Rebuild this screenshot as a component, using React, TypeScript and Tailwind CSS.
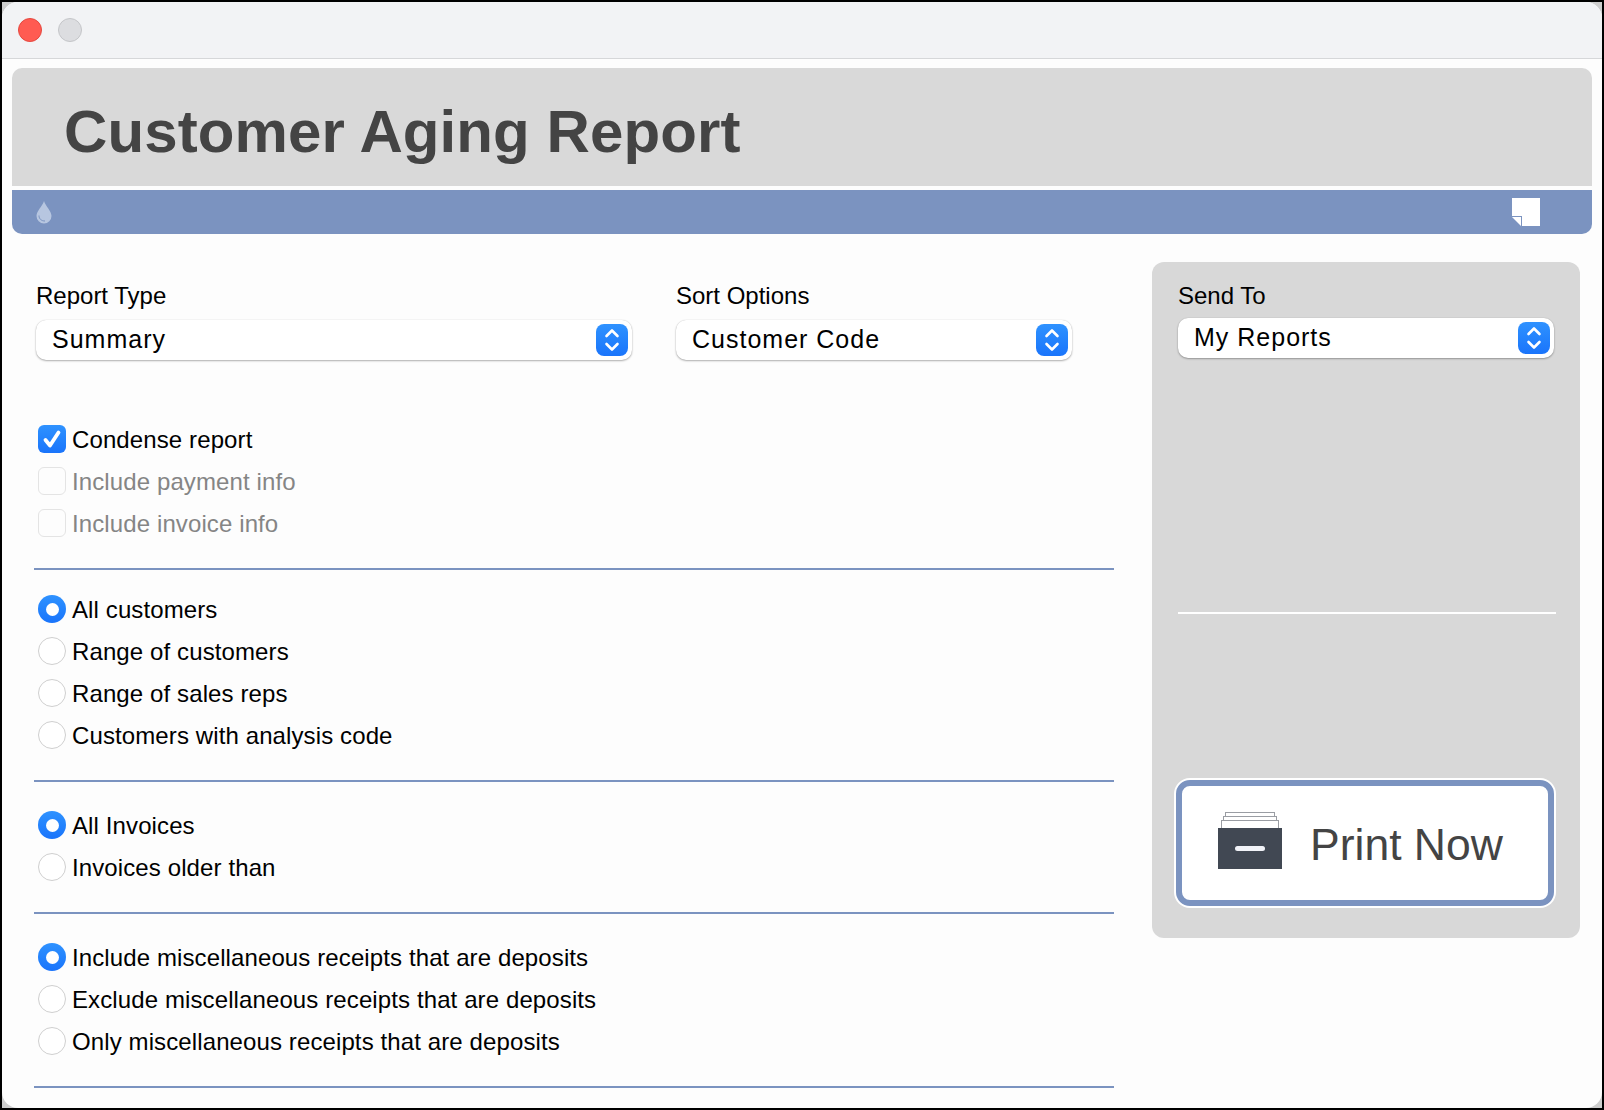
const ArrowStepper = () => (
  <div className="w-8 h-8 rounded-lg bg-gradient-to-b from-[#2f92ff] to-[#1a74fb] flex items-center justify-center shrink-0">
    <svg width="20" height="26" viewBox="0 0 20 26" fill="none" stroke="#fff" strokeWidth="2.6" strokeLinecap="round" strokeLinejoin="round">
      <path d="M4.5 9 L10 3.5 L15.5 9" />
      <path d="M4.5 17 L10 22.5 L15.5 17" />
    </svg>
  </div>
);

const SelectBox = ({ value, className }: { value: string; className: string }) => (
  <div className={`h-10 rounded-[10px] bg-white shadow-[0_1px_2px_rgba(0,0,0,0.3),0_0_1px_rgba(0,0,0,0.2)] flex items-center justify-between pl-4 pr-1 text-[25px] tracking-[1px] text-black ${className}`}>
    <span>{value}</span>
    <ArrowStepper />
  </div>
);

const Check = ({ label, checked, disabled }: { label: string; checked?: boolean; disabled?: boolean }) => (
  <div className="h-[42px] flex items-center pl-1">
    {checked ? (
      <div className="w-7 h-7 rounded-md bg-gradient-to-b from-[#2f92ff] to-[#1a74fb] flex items-center justify-center">
        <svg width="22" height="22" viewBox="0 0 22 22" fill="none" stroke="#fff" strokeWidth="3.8" strokeLinecap="round" strokeLinejoin="round">
          <path d="M4.5 12 L9 17.5 L17.5 4.5" />
        </svg>
      </div>
    ) : (
      <div className="w-7 h-7 rounded-md bg-[#fdfdfd] border border-[#e4e4e4]" />
    )}
    <span className={`ml-[6px] mt-[2px] text-[24px] tracking-[0.11px] ${disabled ? "text-[#858585]" : "text-black"}`}>{label}</span>
  </div>
);

const Radio = ({ label, checked }: { label: string; checked?: boolean }) => (
  <div className="h-[42px] flex items-center pl-1">
    {checked ? (
      <div className="w-7 h-7 rounded-full bg-gradient-to-b from-[#2f92ff] to-[#1a74fb] flex items-center justify-center">
        <div className="w-[13px] h-[13px] rounded-full bg-white" />
      </div>
    ) : (
      <div className="w-7 h-7 rounded-full bg-white border border-[#cfcfcf]" />
    )}
    <span className="ml-[6px] mt-[2px] text-[24px] tracking-[0.11px] text-black">{label}</span>
  </div>
);

const Divider = () => <div className="h-[2px] bg-[#7b93c0]" />;

const PrintIcon = () => (
  <svg className="mb-1" width="64" height="58" viewBox="0 0 64 58" fill="none">
    <rect x="7.5" y="0.5" width="49" height="8" fill="#fff" stroke="#9a9da3" />
    <rect x="5.5" y="4.5" width="53" height="8" fill="#fff" stroke="#9a9da3" />
    <rect x="3.5" y="8.5" width="57" height="9" fill="#fff" stroke="#9a9da3" />
    <rect x="0" y="16" width="64" height="41" fill="#414853" />
    <rect x="17" y="34" width="30" height="5" rx="2.5" fill="#f1f3f8" />
  </svg>
);

export default function App() {
  return (
    <div className="w-[1604px] h-[1110px] bg-black p-[2px] overflow-hidden font-['Liberation_Sans',Arial,sans-serif]">
      <div className="h-full bg-[#cdcdcd]">
        <div className="h-full bg-[#fdfdfd] rounded-t-[16px] rounded-b-[16px] overflow-hidden">
          <div className="h-[57px] bg-[#f2f3f5] border-b border-[#d6d7d9] flex items-center pl-[16px] gap-4">
            <div className="w-6 h-6 rounded-full bg-[#ff5b52] border border-[#e5483f]" />
            <div className="w-6 h-6 rounded-full bg-[#dcdde0] border border-[#c4c5c8]" />
          </div>

          <div className="mt-[9px] mx-[10px] w-[1580px]">
            <div className="h-[118px] bg-[#d9d9d9] rounded-t-[10px] flex items-center pl-[52px] pt-[10px]">
              <h1 className="text-[60px] font-bold tracking-[0.1px] text-[#444444] leading-none">Customer Aging Report</h1>
            </div>
            <div className="mt-1 h-11 bg-[#7b93c0] rounded-b-[10px] flex items-center justify-between pl-6 pr-[52px]">
              <svg width="16" height="24" viewBox="0 0 16 24">
                <path d="M8 1 C9.5 6 15.5 11 15.5 16 A7.5 7.5 0 0 1 0.5 16 C0.5 11 6.5 6 8 1 Z" fill="#b7c6e0" />
                <path d="M3 15.5 C3 19 5.5 21 9 21" fill="none" stroke="#7b93c0" strokeWidth="1" />
              </svg>
              <svg width="28" height="28" viewBox="0 0 28 28">
                <path d="M0 0 H28 V28 H10 V18 H0 Z" fill="#fff" />
                <path d="M0 19 H9 V28 Z" fill="#fff" />
              </svg>
            </div>
          </div>

          <div className="flex mt-7 ml-[32px]">
            <div className="w-[1080px]">
              <div className="flex pl-[2px] gap-[44px]">
                <div className="w-[596px]">
                  <div className="text-[24px] leading-[27px] text-black mt-[20px] mb-[11px]">Report Type</div>
                  <SelectBox value="Summary" className="w-full" />
                </div>
                <div className="w-[396px]">
                  <div className="text-[24px] leading-[27px] text-black mt-[20px] mb-[11px]">Sort Options</div>
                  <SelectBox value="Customer Code" className="w-full" />
                </div>
              </div>

              <div className="mt-[58px]">
                <Check label="Condense report" checked />
                <Check label="Include payment info" disabled />
                <Check label="Include invoice info" disabled />
              </div>
              <div className="mt-[24px]"><Divider /></div>

              <div className="mt-[18px]">
                <Radio label="All customers" checked />
                <Radio label="Range of customers" />
                <Radio label="Range of sales reps" />
                <Radio label="Customers with analysis code" />
              </div>
              <div className="mt-[24px]"><Divider /></div>

              <div className="mt-[22px]">
                <Radio label="All Invoices" checked />
                <Radio label="Invoices older than" />
              </div>
              <div className="mt-[24px]"><Divider /></div>

              <div className="mt-[22px]">
                <Radio label="Include miscellaneous receipts that are deposits" checked />
                <Radio label="Exclude miscellaneous receipts that are deposits" />
                <Radio label="Only miscellaneous receipts that are deposits" />
              </div>
              <div className="mt-[24px]"><Divider /></div>
            </div>

            <div className="ml-[38px] w-[428px] h-[676px] bg-[#d8d8d8] rounded-[12px] px-[26px] pt-[20px] flex flex-col">
              <div className="text-[24px] leading-[27px] text-black mb-[9px]">Send To</div>
              <SelectBox value="My Reports" className="w-[376px]" />
              <div className="mt-[254px] h-[2px] bg-white w-[378px]" />
              <div className="mt-[164px] -ml-[4px] w-[382px] h-[130px] bg-white rounded-[16px] p-[2px]">
                <div className="h-full border-[6px] border-[#7b93c0] rounded-[14px] bg-white flex items-center pl-[36px]">
                  <PrintIcon />
                  <span className="ml-[28px] mt-1 text-[44.5px] text-[#444444]">Print Now</span>
                </div>
              </div>
            </div>
          </div>
        </div>
      </div>
    </div>
  );
}
